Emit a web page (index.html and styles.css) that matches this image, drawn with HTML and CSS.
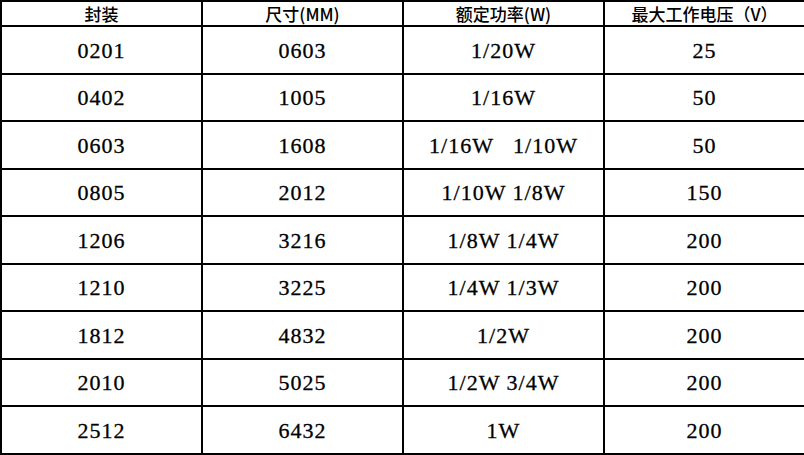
FILE: index.html
```html
<!DOCTYPE html>
<html lang="zh-CN">
<head>
<meta charset="utf-8">
<title>贴片电阻封装尺寸</title>
<link rel="stylesheet" href="styles.css">
</head>
<body>
<table class="spec">
  <colgroup>
    <col class="c1"><col class="c2"><col class="c3"><col class="c4">
  </colgroup>
  <thead>
    <tr class="head">
      <th>封装</th>
      <th>尺寸(MM)</th>
      <th>额定功率(W)</th>
      <th>最大工作电压（V）</th>
    </tr>
  </thead>
  <tbody>
    <tr><td>0201</td><td>0603</td><td>1/20W</td><td>25</td></tr>
    <tr><td>0402</td><td>1005</td><td>1/16W</td><td>50</td></tr>
    <tr><td>0603</td><td>1608</td><td>1/16W   1/10W</td><td>50</td></tr>
    <tr><td>0805</td><td>2012</td><td>1/10W 1/8W</td><td>150</td></tr>
    <tr><td>1206</td><td>3216</td><td>1/8W 1/4W</td><td>200</td></tr>
    <tr><td>1210</td><td>3225</td><td>1/4W 1/3W</td><td>200</td></tr>
    <tr><td>1812</td><td>4832</td><td>1/2W</td><td>200</td></tr>
    <tr><td>2010</td><td>5025</td><td>1/2W 3/4W</td><td>200</td></tr>
    <tr><td>2512</td><td>6432</td><td>1W</td><td>200</td></tr>
  </tbody>
</table>
</body>
</html>
```

FILE: styles.css
```css
html, body {
  margin: 0;
  padding: 0;
  background: #ffffff;
}

.spec {
  width: 804px;
  border-collapse: collapse;
  table-layout: fixed;
  color: #000;
}

.c1 { width: 201px; }
.c2 { width: 201px; }
.c3 { width: 201px; }
.c4 { width: 201px; }

.spec th,
.spec td {
  border: 2px solid #000;
  text-align: center;
  vertical-align: middle;
  padding: 0;
  white-space: pre;
}

.head {
  height: 25px;
}

.spec th {
  font-family: "Noto Sans CJK SC", "Noto Sans", sans-serif;
  font-size: 17px;
  font-weight: 500;
  line-height: 20px;
}

.spec tbody tr {
  height: 47.5px;
}

.spec td {
  font-family: "Liberation Serif", "Times New Roman", serif;
  font-size: 22px;
  letter-spacing: 1px;
  line-height: 24px;
  padding-top: 2px;
  -webkit-text-stroke: 0.3px #000;
}
```
